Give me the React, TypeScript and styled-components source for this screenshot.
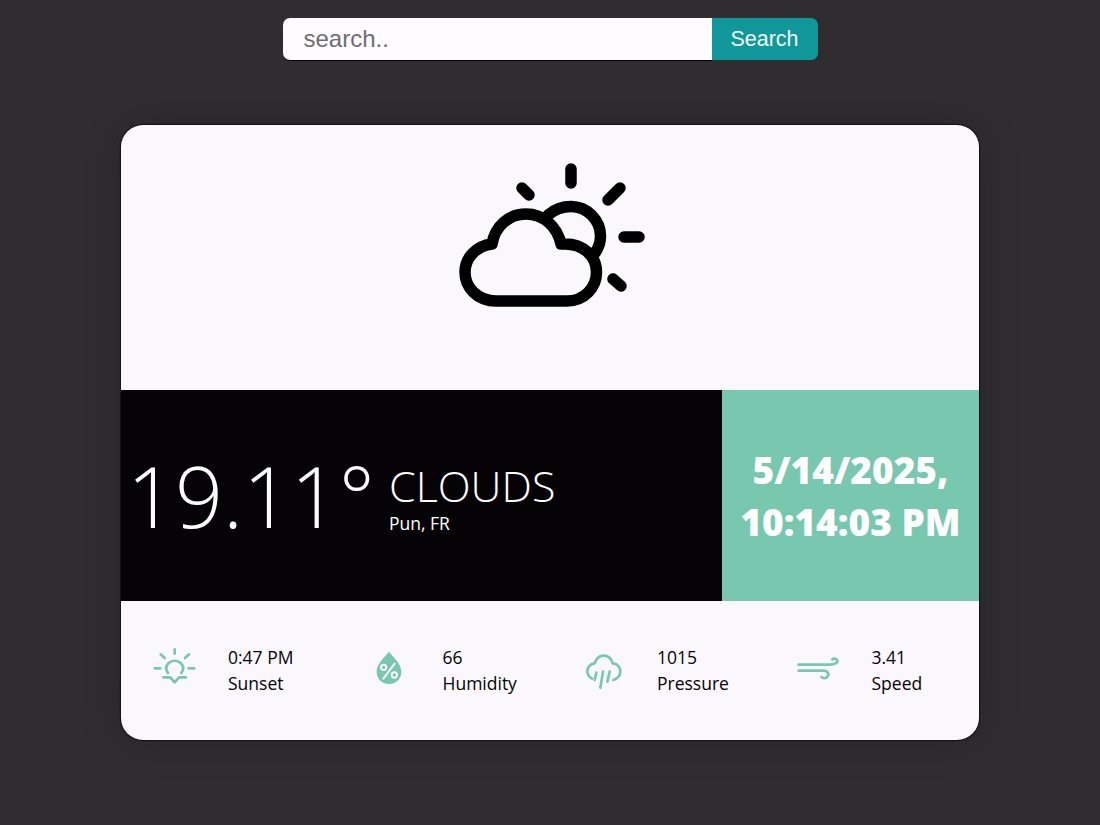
import React from "react";
import styled, { createGlobalStyle } from "styled-components";

const Global = createGlobalStyle`
  html, body { margin: 0; padding: 0; background: #2f2d30; }
  * { box-sizing: border-box; }
`;

const Page = styled.div`
  width: 1100px;
  height: 825px;
  background: #2f2d30;
  padding-top: 18px;
  display: flex;
  flex-direction: column;
  align-items: center;
  overflow: hidden;
`;

const SearchBar = styled.form`
  width: 535px;
  height: 42px;
  display: flex;
  margin: 0 0 65px;
`;

const SearchInput = styled.input`
  width: 429px;
  height: 42px;
  border: none;
  outline: none;
  background: #fefcfe;
  border-radius: 7px 0 0 7px;
  box-shadow: 0 1px 0 #000;
  padding: 0 21px;
  font: 24px "Liberation Sans", Arial, sans-serif;
  color: #222;
  &::placeholder { color: #6f6d72; opacity: 1; }
`;

const SearchButton = styled.button`
  width: 106px;
  height: 42px;
  border: none;
  background: #0f979a;
  color: #f4fbfb;
  border-radius: 0 7px 7px 0;
  font: 21.5px "Liberation Sans", Arial, sans-serif;
  padding: 0;
`;

const Card = styled.main`
  width: 858px;
  height: 615px;
  background: #faf8fc;
  border-radius: 22px;
  overflow: hidden;
  display: flex;
  flex-direction: column;
  box-shadow: 0 0 1px 1px #111, 0 0 40px rgba(0, 0, 0, 0.18);
  font-family: "Open Sans", "Noto Sans", sans-serif;
`;

const Hero = styled.section`
  height: 265px;
  display: flex;
  justify-content: center;
  padding-top: 25px;
`;

const HeroIcon = styled.svg`
  width: 220px;
  height: 170px;
  margin-left: -1px;
  fill: none;
  stroke: #000;
  stroke-width: 11.5;
  stroke-linecap: round;
  stroke-linejoin: round;
`;

const Band = styled.section`
  height: 211px;
  display: grid;
  grid-template-columns: 601px 257px;
`;

const Current = styled.div`
  background: #060306;
  color: #fff;
  display: flex;
  align-items: center;
  padding-left: 6px;
`;

const Temperature = styled.div`
  font-size: 84px;
  font-weight: 300;
  line-height: 1;
  width: 262px;
`;

const Condition = styled.div`
  display: flex;
  flex-direction: column;
  padding-top: 4px;
`;

const ConditionName = styled.div`
  font-size: 43px;
  font-weight: 300;
  line-height: 50px;
  text-transform: uppercase;
`;

const Place = styled.div`
  font-size: 17.5px;
  line-height: 24px;
`;

const DateBox = styled.div`
  background: #78c8b0;
  color: #fff;
  display: flex;
  align-items: center;
  justify-content: center;
  text-align: center;
  font-size: 37px;
  font-weight: 800;
  line-height: 52px;
  padding-bottom: 0;
`;

const Stats = styled.section`
  flex: 1;
  display: grid;
  grid-template-columns: repeat(4, 1fr);
  align-items: center;
  padding-bottom: 1px;
`;

const Stat = styled.div`
  display: grid;
  grid-template-columns: 107px 1fr;
  align-items: center;
`;

const StatIcon = styled.svg`
  width: 60px;
  height: 50px;
  justify-self: center;
  fill: none;
  stroke: #78c8b0;
  stroke-width: 8;
  stroke-linecap: round;
  stroke-linejoin: round;
`;

const StatText = styled.div`
  font-size: 17.5px;
  line-height: 26px;
  color: #050305;
`;

export default function App() {
  return (
    <Page>
      <Global />
      <SearchBar onSubmit={(e) => e.preventDefault()}>
        <SearchInput placeholder="search.." />
        <SearchButton type="submit">Search</SearchButton>
      </SearchBar>
      <Card>
        <Hero>
          <HeroIcon viewBox="0 0 220 170">
            <path d="M131 19V33M82 38L89 45M168 50L180 38M184 87H199M173 129L181 136" />
            <path d="M108 65C115 59 122 56.500 131 56.500C147 56.500 160.500 70 160.500 86C160.500 92 158.500 98 155 103" />
            <path d="M56 151H127C144 151 156.500 138 156.500 122C156.500 106 143 94 125 94H121C117 76 103 64 86 64C69 64 55 76 52 94C36 96 25 108 25 122C25 138 38 151 56 151Z" />
          </HeroIcon>
        </Hero>
        <Band>
          <Current>
            <Temperature>19.11°</Temperature>
            <Condition>
              <ConditionName>Clouds</ConditionName>
              <Place>Pun, FR</Place>
            </Condition>
          </Current>
          <DateBox>
            <div>
              5/14/2025,
              <br />
              10:14:03 PM
            </div>
          </DateBox>
        </Band>
        <Stats>
          <Stat>
            <StatIcon viewBox="21 45 180 150">
              <path d="M110 58V71M68 73L80 84M153 73L141 84M50 115H67M152 115H169" />
              <path d="M90 129C82 118 84 107 92 99C101 90 119 90 128 99C136 107 138 118 130 129" />
              <path d="M76 142H97L110 157L123 142H144" />
            </StatIcon>
            <StatText>
              0:47 PM
              <br />
              Sunset
            </StatText>
          </Stat>
          <Stat>
            <StatIcon viewBox="663 45 180 150">
              <path
                fill="#78c8b0"
                stroke="none"
                d="M753 65C742 80 716 100 716 125C716 147 733 162 753 162C773 162 790 147 790 125C790 100 764 80 753 65Z"
              />
              <g stroke="#faf8fc" strokeWidth="6">
                <circle cx="737" cy="112" r="8" />
                <circle cx="769" cy="135" r="8" />
                <path d="M770 101L736 146" />
              </g>
            </StatIcon>
            <StatText>
              66
              <br />
              Humidity
            </StatText>
          </Stat>
          <Stat>
            <StatIcon viewBox="18 45 180 150">
              <path d="M72 146C62 140 58 132 58 124C58 110 69 101 80 100C85 85 95 77 107 77C120 77 130 85 134 100C148 100 157 112 157 124C157 136 148 146 136 150" />
              <path d="M85 128L80 150M105 125L97 173M125 125L118 155" />
            </StatIcon>
            <StatText>
              1015
              <br />
              Pressure
            </StatText>
          </Stat>
          <Stat>
            <StatIcon viewBox="660 45 180 150">
              <path d="M692 104H785C800 104 810 98 808 92C806 86 798 84 793 88" />
              <path d="M692 122H765C780 122 785 132 778 140C773 146 765 145 760 141" />
            </StatIcon>
            <StatText>
              3.41
              <br />
              Speed
            </StatText>
          </Stat>
        </Stats>
      </Card>
    </Page>
  );
}
